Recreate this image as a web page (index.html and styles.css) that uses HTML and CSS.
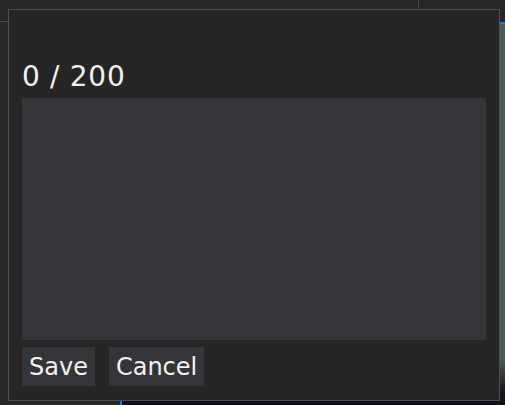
FILE: index.html
```html
<!DOCTYPE html>
<html lang="en">
<head>
    <meta charset="UTF-8">
    <meta name="viewport" content="width=device-width, initial-scale=1.0">
    <title>Edit note</title>
    <link rel="stylesheet" href="styles.css">
</head>
<body>

<div class="app">
    <header class="topbar">
        <div class="topbar-left"></div>
        <div class="topbar-right"></div>
    </header>
    <div class="workspace">
        <aside class="sidebar"></aside>
        <main class="viewer"></main>
    </div>
</div>

<!-- modal editor -->
<div class="dialog">
    <div class="counter">0 / 200</div>
    <textarea class="note" maxlength="200"></textarea>
    <div class="actions">
        <button class="btn">Save</button>
        <button class="btn">Cancel</button>
    </div>
</div>

</body>
</html>
```

FILE: styles.css
```css
html, body {
    margin: 0;
    padding: 0;
    height: 100%;
    overflow: hidden;
}
body {
    background-color: #262626;
    font-family: "DejaVu Sans", sans-serif;
    color: #f2f2f2;
}
.app {
    display: flex;
    flex-direction: column;
    height: 100%;
}
.topbar {
    height: 22px;
    display: flex;
    flex-shrink: 0;
}
.topbar-left {
    width: 418px;
    border-bottom: 1px solid #4a4a4a;
}
.topbar-right {
    flex: 1;
    border-left: 1px solid #4a4a4a;
    height: 7px;
}
.workspace {
    flex: 1;
    display: flex;
}
.sidebar {
    width: 120px;
}
.viewer {
    flex: 1;
    border-top: 2px solid #0a84d6;
    border-left: 2px solid #0a84d6;
    background: linear-gradient(to bottom, #4b5e58 0%, #4b5e58 88%, #1a1a1f 96%, #120d16 100%);
}
.dialog {
    position: absolute;
    left: 8px;
    top: 9px;
    width: 492px;
    height: 392px;
    box-sizing: border-box;
    border: 1px solid #4d4d4d;
    background-color: #252525;
    padding: 51px 13px 14px 13px;
    display: flex;
    flex-direction: column;
}
.counter {
    font-size: 28px;
    line-height: 32px;
    letter-spacing: 0.7px;
    margin-bottom: 5px;
}
.note {
    height: 242px;
    margin: 0;
    padding: 6px;
    box-sizing: border-box;
    border: none;
    background-color: #353438;
    color: #f2f2f2;
    resize: none;
    outline: none;
}
.actions {
    display: flex;
    gap: 14px;
    margin-top: 7px;
}
.btn {
    height: 39px;
    padding: 0 7px;
    border: none;
    background-color: #353438;
    color: #f2f2f2;
    font-family: "DejaVu Sans", sans-serif;
    font-size: 24px;
}
```
